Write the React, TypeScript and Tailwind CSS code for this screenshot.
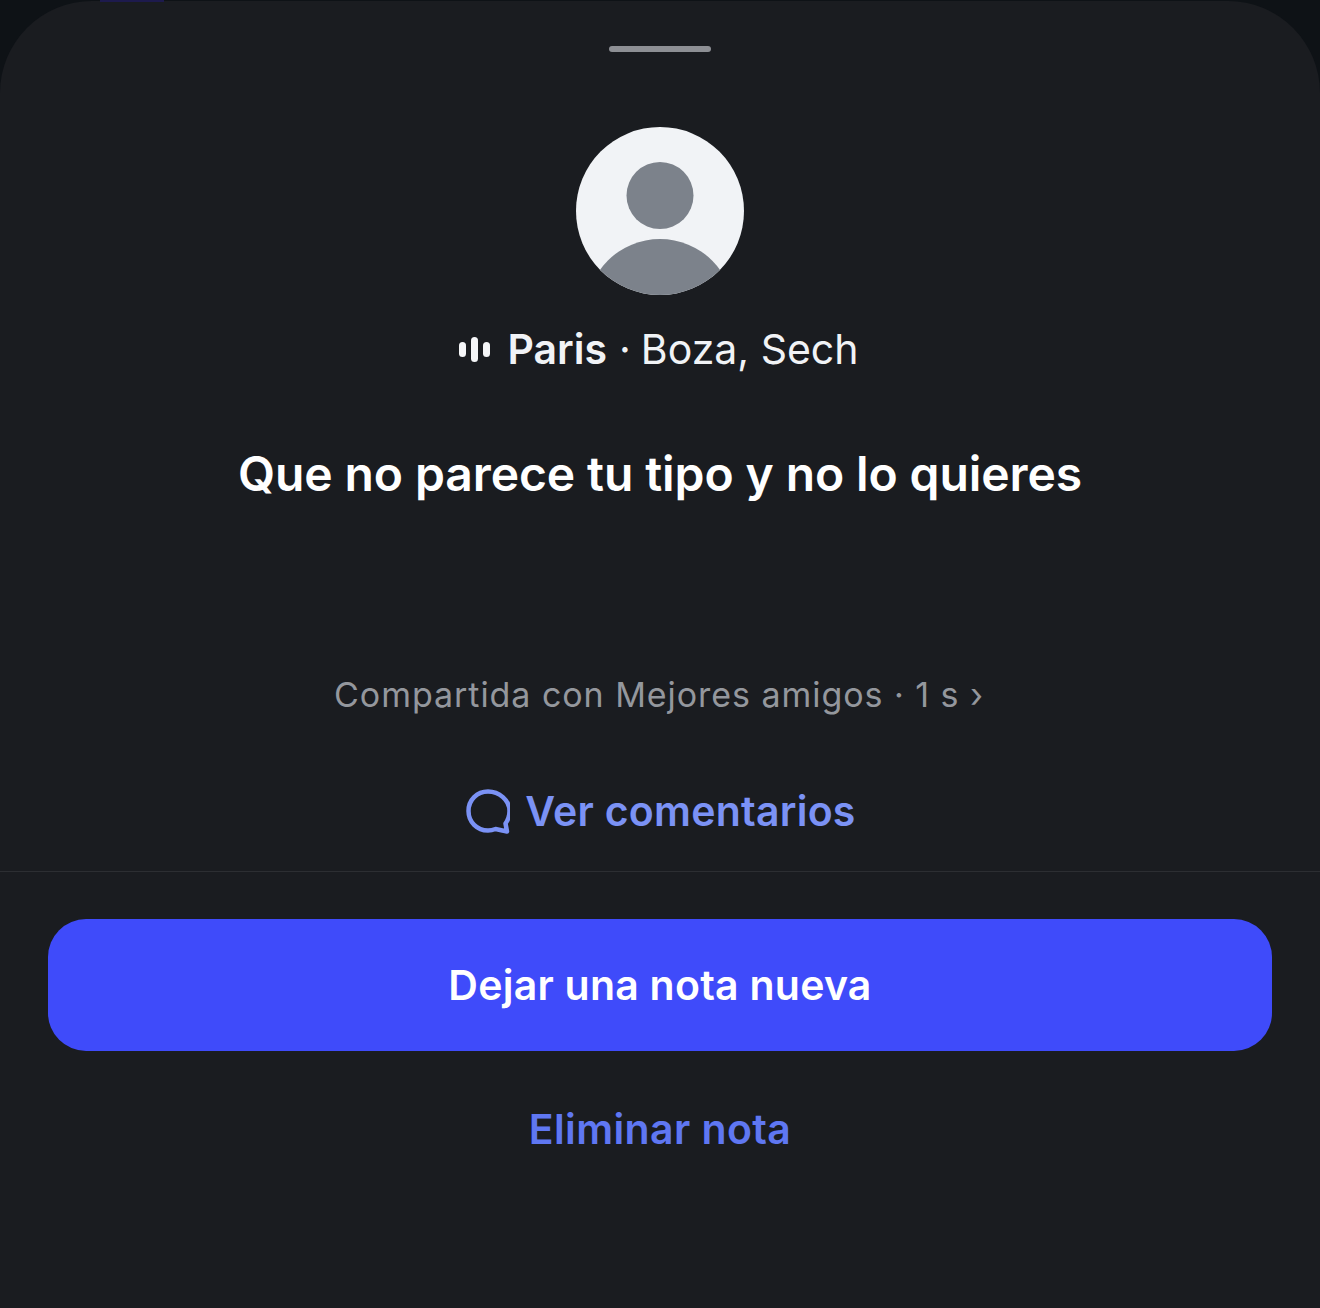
export default function App() {
  return (
    <div className="relative h-[1308px] w-[1320px] overflow-hidden bg-[#0e1216] font-['Inter',sans-serif]">
      <div className="absolute left-[100px] top-0 h-[2px] w-[64px] bg-[#1d1a4d]" />
      <div className="mt-px flex h-[1307px] flex-col items-center rounded-t-[92px] bg-[#1a1c20]">
        <div className="mt-[45px] h-[6px] w-[102px] rounded-full bg-[#8d8f94]" />
        <svg className="mt-[75px] block" width="168" height="168" viewBox="0 0 168 168">
          <defs>
            <clipPath id="c"><circle cx="84" cy="84" r="84" /></clipPath>
          </defs>
          <circle cx="84" cy="84" r="84" fill="#f1f3f6" />
          <circle cx="84" cy="68.5" r="33.5" fill="#7c828b" />
          <ellipse cx="84" cy="186" rx="74" ry="74" fill="#7c828b" clipPath="url(#c)" />
        </svg>
        <div className="mt-[30px] flex h-[48px] items-center pr-[3px] text-[41px] leading-[48px] text-[#f1f3f6]">
          <svg className="mr-[17px]" width="32" height="26" viewBox="0 0 32 26">
            <rect x="1" y="6" width="7" height="15" rx="3.5" fill="#f5f6f8" />
            <rect x="13" y="1" width="7" height="25" rx="3.5" fill="#f5f6f8" />
            <rect x="25" y="6" width="7" height="15" rx="3.5" fill="#f5f6f8" />
          </svg>
          <span className="font-semibold">Paris</span>
          <span className="ml-[12px]">·</span>
          <span className="ml-[10px]">Boza, Sech</span>
        </div>
        <div className="mt-[73px] text-[48px] font-semibold leading-[56px] tracking-[-0.1px] text-white">Que no parece tu tipo y no lo quieres</div>
        <div className="mt-[171px] pr-[2px] text-[34px] leading-[44px] tracking-[0.95px] text-[#94979d]">Compartida con Mejores amigos · 1 s ›</div>
        <div className="mt-[70px] flex h-[48px] items-center pl-[2px] text-[41px] font-semibold leading-[48px] tracking-[0.25px] text-[#7b92f5]">
          <svg className="mr-[15px]" width="44" height="46" viewBox="0 0 44 46" fill="none">
            <path d="M22 3.500C11 3.500 2.500 12 2.500 23S11 42.500 22 42.500c2.500 0 5-.5 7.500-1.500l11.500 2.500-1.500-8c2.500-3.500 4-7.500 4-12.500C43.500 12 33 3.500 22 3.500Z" stroke="#7b92f5" strokeWidth="4.500" strokeLinejoin="round" />
          </svg>
          Ver comentarios
        </div>
        <div className="mt-[36px] h-px w-full bg-[#2c2e32]" />
        <button className="mt-[47px] flex h-[132px] w-[1224px] items-center justify-center rounded-[38px] bg-[#3f4bfa] pt-[2px] text-[41px] font-semibold tracking-[0.25px] text-white">Dejar una nota nueva</button>
        <div className="mt-[54px] text-[41px] font-semibold leading-[48px] tracking-[0.4px] text-[#5f77f2]">Eliminar nota</div>
      </div>
    </div>
  );
}
